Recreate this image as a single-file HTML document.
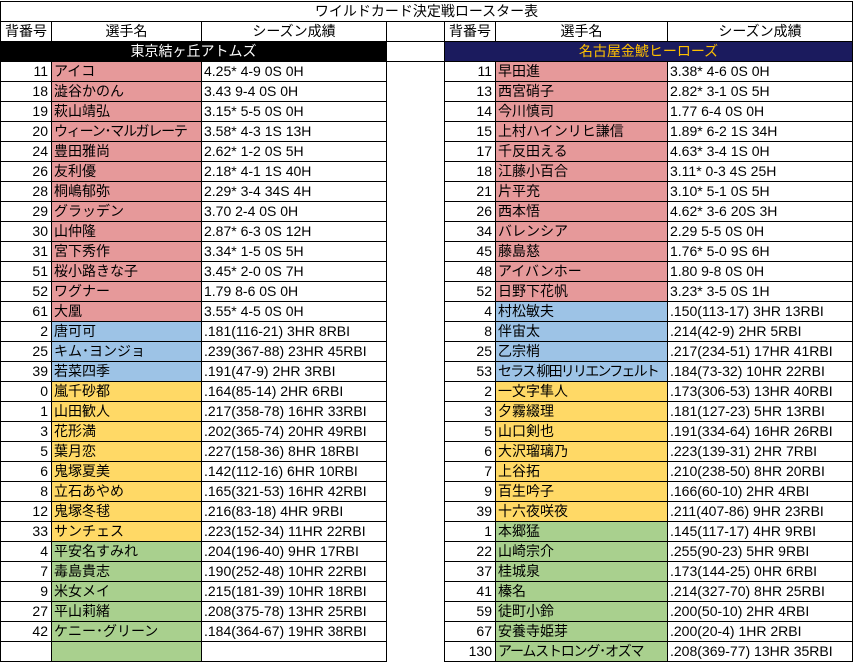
<!DOCTYPE html>
<html><head><meta charset="utf-8"><style>
html,body{margin:0;padding:0;background:#fff;width:853px;height:662px;overflow:hidden}
table{border-collapse:collapse;table-layout:fixed;width:852px;position:absolute;left:0;top:1px;font-family:"Liberation Sans","Noto Sans CJK JP",sans-serif;font-size:14px;color:#000}
td{height:19px;line-height:19px;padding:0 2px;border:1px solid #000;white-space:nowrap;overflow:hidden}
td.n{text-align:right;padding-right:3px}
td.c{text-align:center}
td.g{border:none}
.s{letter-spacing:-1.2px}
.p{background:#E6999A}.b{background:#9DC3E6}.y{background:#FFD966}.gr{background:#A9D08E}
.tk{background:#000;color:#fff;text-align:center}
.nv{background:#1B1B5E;color:#FFC000;text-align:center}
</style></head><body>
<table>
<colgroup><col style="width:51px"><col style="width:150px"><col style="width:185px"><col style="width:58px"><col style="width:51px"><col style="width:172px"><col style="width:185px"></colgroup>
<tr><td colspan="7" class="c">ワイルドカード決定戦ロースター表</td></tr>
<tr><td class="c">背番号</td><td class="c">選手名</td><td class="c">シーズン成績</td><td></td><td class="c">背番号</td><td class="c">選手名</td><td class="c">シーズン成績</td></tr>
<tr><td colspan="3" class="tk">東京結ヶ丘アトムズ</td><td></td><td colspan="3" class="nv">名古屋金鯱ヒーローズ</td></tr>
<tr><td class="n">11</td><td class="p">アイコ</td><td>4.25* 4-9 0S 0H</td><td class="g"></td><td class="n">11</td><td class="p">早田進</td><td>3.38* 4-6 0S 0H</td></tr>
<tr><td class="n">18</td><td class="p">澁谷かのん</td><td>3.43 9-4 0S 0H</td><td class="g"></td><td class="n">13</td><td class="p">西宮硝子</td><td>2.82* 3-1 0S 5H</td></tr>
<tr><td class="n">19</td><td class="p">萩山靖弘</td><td>3.15* 5-5 0S 0H</td><td class="g"></td><td class="n">14</td><td class="p">今川慎司</td><td>1.77 6-4 0S 0H</td></tr>
<tr><td class="n">20</td><td class="p s">ウィーン･マルガレーテ</td><td>3.58* 4-3 1S 13H</td><td class="g"></td><td class="n">15</td><td class="p">上村ハインリヒ謙信</td><td>1.89* 6-2 1S 34H</td></tr>
<tr><td class="n">24</td><td class="p">豊田雅尚</td><td>2.62* 1-2 0S 5H</td><td class="g"></td><td class="n">17</td><td class="p">千反田える</td><td>4.63* 3-4 1S 0H</td></tr>
<tr><td class="n">26</td><td class="p">友利優</td><td>2.18* 4-1 1S 40H</td><td class="g"></td><td class="n">18</td><td class="p">江藤小百合</td><td>3.11* 0-3 4S 25H</td></tr>
<tr><td class="n">28</td><td class="p">桐嶋郁弥</td><td>2.29* 3-4 34S 4H</td><td class="g"></td><td class="n">21</td><td class="p">片平充</td><td>3.10* 5-1 0S 5H</td></tr>
<tr><td class="n">29</td><td class="p">グラッデン</td><td>3.70 2-4 0S 0H</td><td class="g"></td><td class="n">26</td><td class="p">西本悟</td><td>4.62* 3-6 20S 3H</td></tr>
<tr><td class="n">30</td><td class="p">山仲隆</td><td>2.87* 6-3 0S 12H</td><td class="g"></td><td class="n">34</td><td class="p">バレンシア</td><td>2.29 5-5 0S 0H</td></tr>
<tr><td class="n">31</td><td class="p">宮下秀作</td><td>3.34* 1-5 0S 5H</td><td class="g"></td><td class="n">45</td><td class="p">藤島慈</td><td>1.76* 5-0 9S 6H</td></tr>
<tr><td class="n">51</td><td class="p">桜小路きな子</td><td>3.45* 2-0 0S 7H</td><td class="g"></td><td class="n">48</td><td class="p">アイバンホー</td><td>1.80 9-8 0S 0H</td></tr>
<tr><td class="n">52</td><td class="p">ワグナー</td><td>1.79 8-6 0S 0H</td><td class="g"></td><td class="n">52</td><td class="p">日野下花帆</td><td>3.23* 3-5 0S 1H</td></tr>
<tr><td class="n">61</td><td class="p">大凰</td><td>3.55* 4-5 0S 0H</td><td class="g"></td><td class="n">4</td><td class="b">村松敏夫</td><td>.150(113-17) 3HR 13RBI</td></tr>
<tr><td class="n">2</td><td class="b">唐可可</td><td>.181(116-21) 3HR 8RBI</td><td class="g"></td><td class="n">8</td><td class="b">伴宙太</td><td>.214(42-9) 2HR 5RBI</td></tr>
<tr><td class="n">25</td><td class="b">キム･ヨンジョ</td><td>.239(367-88) 23HR 45RBI</td><td class="g"></td><td class="n">25</td><td class="b">乙宗梢</td><td>.217(234-51) 17HR 41RBI</td></tr>
<tr><td class="n">39</td><td class="b">若菜四季</td><td>.191(47-9) 2HR 3RBI</td><td class="g"></td><td class="n">53</td><td class="b s" style="letter-spacing:-1.8px">セラス 柳田リリエンフェルト</td><td>.184(73-32) 10HR 22RBI</td></tr>
<tr><td class="n">0</td><td class="y">嵐千砂都</td><td>.164(85-14) 2HR 6RBI</td><td class="g"></td><td class="n">2</td><td class="y">一文字隼人</td><td>.173(306-53) 13HR 40RBI</td></tr>
<tr><td class="n">1</td><td class="y">山田歓人</td><td>.217(358-78) 16HR 33RBI</td><td class="g"></td><td class="n">3</td><td class="y">夕霧綴理</td><td>.181(127-23) 5HR 13RBI</td></tr>
<tr><td class="n">3</td><td class="y">花形満</td><td>.202(365-74) 20HR 49RBI</td><td class="g"></td><td class="n">5</td><td class="y">山口剣也</td><td>.191(334-64) 16HR 26RBI</td></tr>
<tr><td class="n">5</td><td class="y">葉月恋</td><td>.227(158-36) 8HR 18RBI</td><td class="g"></td><td class="n">6</td><td class="y">大沢瑠璃乃</td><td>.223(139-31) 2HR 7RBI</td></tr>
<tr><td class="n">6</td><td class="y">鬼塚夏美</td><td>.142(112-16) 6HR 10RBI</td><td class="g"></td><td class="n">7</td><td class="y">上谷拓</td><td>.210(238-50) 8HR 20RBI</td></tr>
<tr><td class="n">8</td><td class="y">立石あやめ</td><td>.165(321-53) 16HR 42RBI</td><td class="g"></td><td class="n">9</td><td class="y">百生吟子</td><td>.166(60-10) 2HR 4RBI</td></tr>
<tr><td class="n">12</td><td class="y">鬼塚冬毬</td><td>.216(83-18) 4HR 9RBI</td><td class="g"></td><td class="n">39</td><td class="y">十六夜咲夜</td><td>.211(407-86) 9HR 23RBI</td></tr>
<tr><td class="n">33</td><td class="y">サンチェス</td><td>.223(152-34) 11HR 22RBI</td><td class="g"></td><td class="n">1</td><td class="gr">本郷猛</td><td>.145(117-17) 4HR 9RBI</td></tr>
<tr><td class="n">4</td><td class="gr">平安名すみれ</td><td>.204(196-40) 9HR 17RBI</td><td class="g"></td><td class="n">22</td><td class="gr">山崎宗介</td><td>.255(90-23) 5HR 9RBI</td></tr>
<tr><td class="n">7</td><td class="gr">毒島貴志</td><td>.190(252-48) 10HR 22RBI</td><td class="g"></td><td class="n">37</td><td class="gr">桂城泉</td><td>.173(144-25) 0HR 6RBI</td></tr>
<tr><td class="n">9</td><td class="gr">米女メイ</td><td>.215(181-39) 10HR 18RBI</td><td class="g"></td><td class="n">41</td><td class="gr">榛名</td><td>.214(327-70) 8HR 25RBI</td></tr>
<tr><td class="n">27</td><td class="gr">平山莉緒</td><td>.208(375-78) 13HR 25RBI</td><td class="g"></td><td class="n">59</td><td class="gr">徒町小鈴</td><td>.200(50-10) 2HR 4RBI</td></tr>
<tr><td class="n">42</td><td class="gr">ケニー･グリーン</td><td>.184(364-67) 19HR 38RBI</td><td class="g"></td><td class="n">67</td><td class="gr">安養寺姫芽</td><td>.200(20-4) 1HR 2RBI</td></tr>
<tr><td class="n"></td><td class="gr"></td><td></td><td class="g"></td><td class="n">130</td><td class="gr s">アームストロング･オズマ</td><td>.208(369-77) 13HR 35RBI</td></tr>
</table>
</body></html>
